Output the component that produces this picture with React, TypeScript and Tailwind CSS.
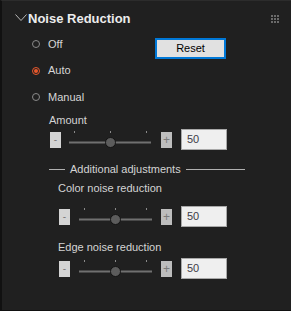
import React from "react";

const font = { fontFamily: '"Liberation Sans", Arial, sans-serif' };

function Radio({ label, checked }: { label: string; checked?: boolean }) {
  return (
    <div className="flex items-center h-full">
      {checked ? (
        <div className="w-[8px] h-[8px] rounded-full border border-[#e8582c] flex items-center justify-center">
          <div className="w-[4px] h-[4px] rounded-full bg-[#e8582c]" />
        </div>
      ) : (
        <div className="w-[8px] h-[8px] rounded-full border-[1.5px] border-[#8a8a8a]" />
      )}
      <span className="ml-[8px] text-[11px] text-[#d6d6d6] leading-none">{label}</span>
    </div>
  );
}

function Slider({ width, trackStart, trackEnd, ticks, thumb }: { width: number; trackStart: number; trackEnd: number; ticks: number[]; thumb: number }) {
  return (
    <svg width={width} height={21} className="block shrink-0">
      {ticks.map((t) => (
        <rect key={t} x={t} y={2} width={1} height={2} fill="#8a8a8a" />
      ))}
      <rect x={trackStart} y={12.5} width={trackEnd - trackStart} height={2} fill="#707070" />
      <circle cx={thumb + 0.5} cy={13.5} r={5} fill="#5c5c5c" stroke="#141414" strokeWidth={1} />
    </svg>
  );
}

function SliderRow({ indent, width, trackStart, trackEnd, ticks, thumb }: { indent: string; width: number; trackStart: number; trackEnd: number; ticks: number[]; thumb: number }) {
  return (
    <div className={`flex items-center h-[21px] ${indent}`}>
      <div className="w-[11px] h-[16px] bg-[#d4d4d4] flex items-center justify-center text-[#7a7a7a] text-[10px] leading-none shrink-0">
        -
      </div>
      <Slider width={width} trackStart={trackStart} trackEnd={trackEnd} ticks={ticks} thumb={thumb} />
      <div className="w-[11px] h-[16px] bg-[#bdbdbd] flex items-center justify-center text-[#7a7a7a] text-[12px] leading-none shrink-0">
        +
      </div>
      <div className="ml-[9px] w-[46px] h-[21px] bg-[#efefef] border border-[#a8a8a8] flex items-center pl-[5px] text-[11px] text-[#3c3c48] leading-none shrink-0">
        50
      </div>
    </div>
  );
}

export default function App() {
  return (
    <div
      className="w-[291px] h-[311px] bg-[#202020] border-l-2 border-b border-t border-l-[#111111] border-b-[#111111] border-t-[#2c2c2c] overflow-hidden"
      style={font}
    >
      {/* Header */}
      <div className="flex items-center h-[20px] mt-[7px] pl-[13px] pr-[12px]">
        <svg width={12} height={8} className="block">
          <path d="M0.5 0.5 L6 6.5 L11.5 0.5" fill="none" stroke="#b8b8b8" strokeWidth={1} />
        </svg>
        <span className="ml-[1px] text-[13px] font-bold text-[#ececec] leading-none">Noise Reduction</span>
        <div className="ml-auto grid grid-cols-3 gap-[1px] mt-[1px]">
          {Array.from({ length: 9 }).map((_, i) => (
            <div key={i} className="w-[2px] h-[2px] bg-[#6a6a6a]" />
          ))}
        </div>
      </div>

      {/* Radios + Reset */}
      <div className="flex mt-[3px] pl-[30px]">
        <div className="flex flex-col w-[123px]">
          <div className="h-[26px]">
            <Radio label="Off" />
          </div>
          <div className="h-[27px]">
            <Radio label="Auto" checked />
          </div>
          <div className="h-[26px]">
            <Radio label="Manual" />
          </div>
        </div>
        <button className="mt-[7px] w-[71px] h-[21px] bg-[#e1e1e1] border-2 border-[#0078d7] text-[11px] text-black leading-none flex items-center justify-center">
          Reset
        </button>
      </div>

      {/* Amount */}
      <div className="mt-[2px] h-[16px] pl-[47px] flex items-center text-[11px] text-[#d4d4d4] leading-none">Amount</div>
      <div className="mt-[1px]">
        <SliderRow indent="pl-[48px]" width={100} trackStart={8} trackEnd={90} ticks={[13, 49, 85]} thumb={49} />
      </div>

      {/* Additional adjustments */}
      <div className="mt-[10px] h-[18px] flex items-center pl-[47px]">
        <div className="w-[16px] h-[1px] bg-[#b0b0b0]" />
        <span className="ml-[5px] text-[11px] text-[#d4d4d4] leading-none whitespace-nowrap">Additional adjustments</span>
        <div className="ml-[5px] w-[59px] h-[1px] bg-[#b0b0b0]" />
      </div>

      <div className="mt-[2px] h-[16px] pl-[56px] flex items-center text-[11px] text-[#d4d4d4] leading-none">Color noise reduction</div>
      <div className="mt-[10px]">
        <SliderRow indent="pl-[57px]" width={91} trackStart={9} trackEnd={82} ticks={[14, 45, 76]} thumb={45} />
      </div>

      <div className="mt-[12px] h-[16px] pl-[56px] flex items-center text-[11px] text-[#d4d4d4] leading-none">Edge noise reduction</div>
      <div className="mt-[3px]">
        <SliderRow indent="pl-[57px]" width={91} trackStart={9} trackEnd={82} ticks={[14, 45, 76]} thumb={45} />
      </div>
    </div>
  );
}
